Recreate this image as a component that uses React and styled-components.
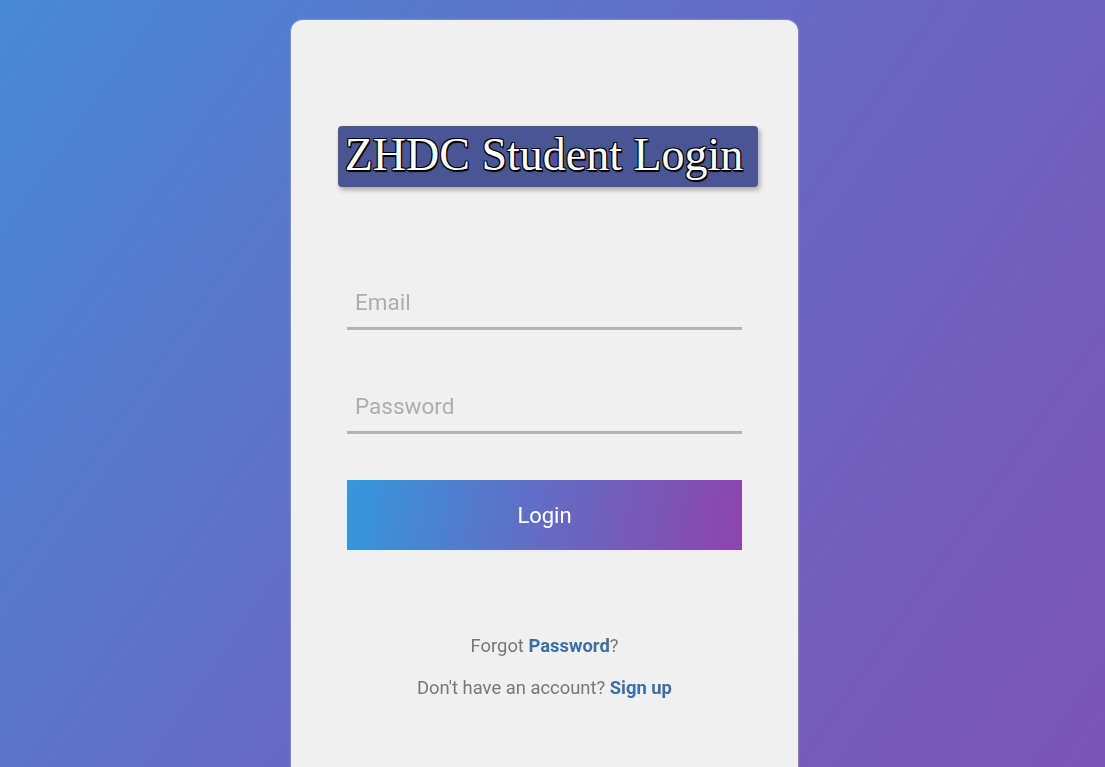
import React from 'react';
import styled, { createGlobalStyle } from 'styled-components';

const GlobalStyle = createGlobalStyle`
  html, body {
    margin: 0;
    padding: 0;
    height: 100%;
    overflow: hidden;
  }

  body {
    font-family: Roboto, "Liberation Sans", sans-serif;
    background: linear-gradient(125deg, #4789d5 0%, #6a66c2 55%, #7c54b7 100%);
  }
`;

const Page = styled.div`
  display: flex;
  justify-content: center;
  min-height: 100vh;
  padding-top: 20px;
  padding-right: 16px;
  box-sizing: border-box;
`;

const Card = styled.div`
  width: 507px;
  min-height: 800px;
  box-sizing: border-box;
  padding: 106px 56px 0;
  background: #f0f0f0;
  border-radius: 12px;
  box-shadow: 0 0 2px rgba(255, 255, 255, 0.6);
  display: flex;
  flex-direction: column;
  align-items: center;
`;

const Title = styled.h1`
  margin: 0 0 89px 7px;
  height: 61px;
  padding: 0 15px 4px 7px;
  box-sizing: border-box;
  display: flex;
  align-items: center;
  background: #4a5694;
  border-radius: 4px;
  box-shadow: 2px 3px 5px rgba(0, 0, 0, 0.3);
  font-family: "Liberation Serif", "Times New Roman", serif;
  font-weight: normal;
  font-size: 46px;
  color: #fff;
  white-space: nowrap;
  text-shadow:
    1px 1px 0 #000, -1px -1px 0 #000, 1px -1px 0 #000, -1px 1px 0 #000,
    1px 2px 1px #000;
`;

const Form = styled.form`
  width: 100%;
  display: flex;
  flex-direction: column;
  filter: blur(0.7px);
`;

const Input = styled.input`
  height: 54px;
  box-sizing: border-box;
  margin-bottom: ${(p) => p.$gap}px;
  padding: 0 8px;
  border: none;
  border-bottom: 3px solid #b4b4b4;
  background: transparent;
  font-family: Roboto, "Liberation Sans", sans-serif;
  font-size: 22.5px;
  color: #555;
  outline: none;

  &::placeholder {
    color: #adadad;
  }
`;

const Button = styled.button`
  height: 70px;
  border: none;
  background: linear-gradient(100deg, #3498db 0%, #5f6fc6 45%, #8e44ad 100%);
  color: #fff;
  font-family: Roboto, "Liberation Sans", sans-serif;
  font-size: 22px;
  cursor: pointer;
`;

const Links = styled.div`
  margin-top: 85px;
  display: flex;
  flex-direction: column;
  align-items: center;
  gap: 20px;
`;

const Note = styled.p`
  margin: 0;
  font-size: 18.4px;
  line-height: 22px;
  color: #777;
`;

const Link = styled.a`
  color: #3a6fa6;
  font-weight: bold;
  text-decoration: none;
`;

export default function App() {
  return (
    <>
      <GlobalStyle />
      <Page>
        <Card>
          <Title>ZHDC Student Login</Title>
          <Form onSubmit={(e) => e.preventDefault()}>
            <Input type="email" placeholder="Email" $gap={50} />
            <Input type="password" placeholder="Password" $gap={46} />
            <Button type="submit">Login</Button>
            <Links>
              <Note>
                Forgot <Link href="#">Password</Link>?
              </Note>
              <Note>
                Don't have an account? <Link href="#">Sign up</Link>
              </Note>
            </Links>
          </Form>
        </Card>
      </Page>
    </>
  );
}
